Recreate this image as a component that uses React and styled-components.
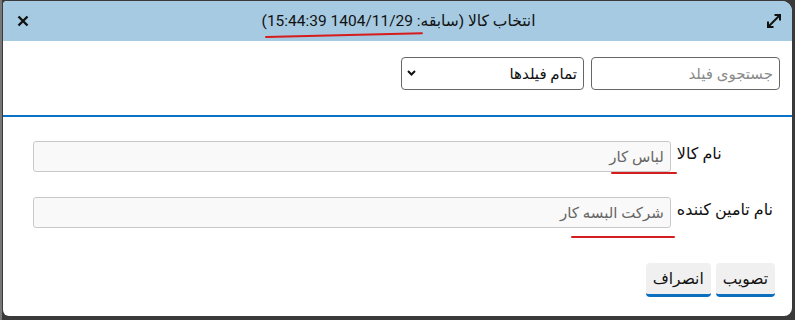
import React from 'react';
import styled, { createGlobalStyle } from 'styled-components';

const GlobalStyle = createGlobalStyle`
    html, body {
        margin: 0;
        padding: 0;
        background: #3a3a3a;
        font-family: Roboto, "DejaVu Sans", sans-serif;
    }
    body {
        width: 795px;
        height: 320px;
        overflow: hidden;
        border-left: 2px solid #777;
        box-sizing: border-box;
    }
`;

const Dialog = styled.div`
    position: relative;
    direction: rtl;
    margin: 1px 3px 0 1px;
    width: 789px;
    height: 315px;
    background: #fff;
    border-radius: 4px 10px 8px 6px;
    overflow: hidden;
    display: flex;
    flex-direction: column;
`;

const Header = styled.div`
    height: 40px;
    background: #a6cae1;
    display: grid;
    grid-template-columns: 1fr auto 1fr;
    align-items: center;
    padding: 0 10px 0 12px;
    color: #111;
`;

const Title = styled.div`
    font-size: 15.5px;
    white-space: nowrap;
`;

const IconBtn = styled.span`
    display: flex;
    justify-self: ${(p) => p.$end ? 'end' : 'start'};
    width: 16px;
    height: 16px;
    align-items: center;
    justify-content: center;
`;

const Toolbar = styled.div`
    display: flex;
    gap: 7px;
    padding: 16px 12px 25px;
    border-bottom: 2px solid #0b72c6;
`;

const SearchInput = styled.input`
    direction: rtl;
    width: 189px;
    height: 33px;
    box-sizing: border-box;
    border: 1px solid #666;
    border-radius: 4px;
    padding: 0 6px;
    font-family: inherit;
    font-size: 15px;
    color: #222;
    outline: none;
    &::placeholder { color: #8a8a8a; }
`;

const SelectWrap = styled.div`
    position: relative;
    width: 183px;
    height: 33px;
`;

const Select = styled.select`
    appearance: none;
    direction: rtl;
    width: 100%;
    height: 100%;
    box-sizing: border-box;
    border: 1px solid #666;
    border-radius: 4px;
    background: #fff;
    padding: 0 6px;
    font-family: inherit;
    font-size: 15px;
    color: #111;
    outline: none;
`;

const Chevron = styled.svg`
    position: absolute;
    left: 6px;
    top: 13px;
    pointer-events: none;
`;

const Form = styled.div`
    display: grid;
    grid-template-columns: auto 1fr;
    column-gap: 6px;
    row-gap: 25px;
    padding: 24px 19px 0 30px;
`;

const Label = styled.label`
    font-size: 16px;
    color: #111;
    text-align: left;
    padding-top: 3px;
`;

const Field = styled.input`
    direction: rtl;
    height: 31px;
    box-sizing: border-box;
    background: #f9f9f9;
    border: 1px solid #c8c8c8;
    border-radius: 3px;
    padding: 0 6px;
    font-family: inherit;
    font-size: 15px;
    color: #666;
    outline: none;
`;

const Actions = styled.div`
    display: flex;
    gap: 5px;
    padding: 35px 17px 0;
`;

const Button = styled.button`
    height: 34px;
    padding: 0 7px;
    background: #f0f0f0;
    border: none;
    border-bottom: 3px solid #0b6fc0;
    border-radius: 4px;
    font-family: inherit;
    font-size: 15.5px;
    color: #111;
`;

const Mark = styled.span`
    position: absolute;
    left: ${(p) => p.$x}px;
    top: ${(p) => p.$y}px;
    width: ${(p) => p.$w}px;
    height: 2px;
    background: #d61c1c;
    border-radius: 1px;
    transform: rotate(${(p) => p.$r || 0}deg);
    transform-origin: left center;
`;

const App = () => {
    return (
        <>
            <GlobalStyle />
            <Dialog>
                <Header>
                    <IconBtn>
                        <svg width="16" height="16" viewBox="0 0 16 16">
                            <path d="M2 14 L14 2" stroke="#111" strokeWidth="2" />
                            <path d="M8.5 2 H14 V7.5" fill="none" stroke="#111" strokeWidth="2" />
                            <path d="M2 8.5 V14 H7.5" fill="none" stroke="#111" strokeWidth="2" />
                        </svg>
                    </IconBtn>
                    <Title>انتخاب کالا (سابقه: 1404/11/29 15:44:39)</Title>
                    <IconBtn $end>
                        <svg width="12" height="12" viewBox="0 0 12 12">
                            <path d="M1.5 1.5 L10.5 10.5 M10.5 1.5 L1.5 10.5" stroke="#111" strokeWidth="2.4" />
                        </svg>
                    </IconBtn>
                </Header>
                <Toolbar>
                    <SearchInput placeholder="جستجوی فیلد" />
                    <SelectWrap>
                        <Select defaultValue="all">
                            <option value="all">تمام فیلدها</option>
                        </Select>
                        <Chevron width="9" height="6" viewBox="0 0 9 6">
                            <path d="M1 1 L4.5 4.5 L8 1" fill="none" stroke="#111" strokeWidth="2" />
                        </Chevron>
                    </SelectWrap>
                </Toolbar>
                <Form>
                    <Label>نام کالا</Label>
                    <Field readOnly value="لباس کار" />
                    <Label>نام تامین کننده</Label>
                    <Field readOnly value="شرکت البسه کار" />
                </Form>
                <Actions>
                    <Button>تصویب</Button>
                    <Button>انصراف</Button>
                </Actions>
                <Mark $x={262} $y={35} $w={158} $r={-1.4} />
                <Mark $x={608} $y={171} $w={66} />
                <Mark $x={568} $y={235} $w={104} />
            </Dialog>
        </>
    );
}

export default App;
